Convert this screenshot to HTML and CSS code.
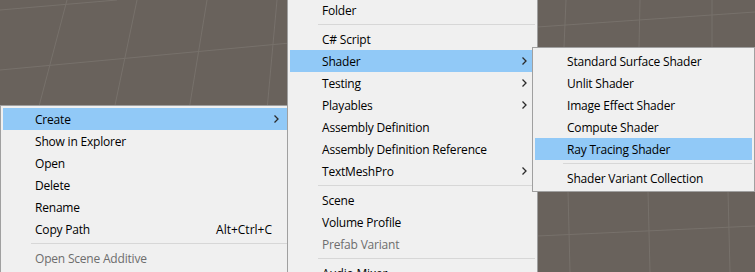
FILE: index.html
```html
<!DOCTYPE html>
<html lang="en">
<head>
    <meta charset="UTF-8">
    <title>Project context menu</title>
    <link rel="stylesheet" href="styles.css">
</head>
<body>
    <div class="scene">
        <svg class="grid" width="755" height="272" viewBox="0 0 755 272">
            <g stroke="#77716b" stroke-width="1" fill="none">
                <line x1="0" y1="10" x2="117" y2="0"/>
                <line x1="0" y1="70" x2="290" y2="43"/>
                <line x1="67" y1="0" x2="38" y2="110"/>
                <line x1="137" y1="0" x2="114" y2="110"/>
                <line x1="207" y1="0" x2="189" y2="110"/>
                <line x1="277" y1="0" x2="267" y2="110"/>
                <line x1="537" y1="27" x2="755" y2="12"/>
                <line x1="566" y1="0" x2="564" y2="47"/>
                <line x1="640" y1="0" x2="639" y2="47"/>
                <line x1="712" y1="0" x2="712" y2="47"/>
                <line x1="537" y1="236" x2="755" y2="226"/>
                <line x1="568" y1="191" x2="570" y2="272"/>
                <line x1="648" y1="191" x2="650" y2="272"/>
                <line x1="728" y1="191" x2="730" y2="272"/>
            </g>
        </svg>

        <div class="menu menu-left">
            <div class="item active">Create <span class="arrow"><svg width="5" height="8" viewBox="0 0 5 8"><polyline points="0.5,0.5 4,4 0.5,7.5" fill="none" stroke="#2b2b2b" stroke-width="1.3"/></svg></span></div>
            <div class="item">Show in Explorer</div>
            <div class="item">Open</div>
            <div class="item">Delete</div>
            <div class="item">Rename</div>
            <div class="item">Copy Path <span class="shortcut">Alt+Ctrl+C</span></div>
            <div class="sep"></div>
            <div class="item disabled">Open Scene Additive</div>
        </div>

        <div class="menu menu-mid">
            <div class="item">Folder</div>
            <div class="sep"></div>
            <div class="item">C# Script</div>
            <div class="item active">Shader <span class="arrow"><svg width="5" height="8" viewBox="0 0 5 8"><polyline points="0.5,0.5 4,4 0.5,7.5" fill="none" stroke="#2b2b2b" stroke-width="1.3"/></svg></span></div>
            <div class="item">Testing <span class="arrow"><svg width="5" height="8" viewBox="0 0 5 8"><polyline points="0.5,0.5 4,4 0.5,7.5" fill="none" stroke="#2b2b2b" stroke-width="1.3"/></svg></span></div>
            <div class="item">Playables <span class="arrow"><svg width="5" height="8" viewBox="0 0 5 8"><polyline points="0.5,0.5 4,4 0.5,7.5" fill="none" stroke="#2b2b2b" stroke-width="1.3"/></svg></span></div>
            <div class="item">Assembly Definition</div>
            <div class="item">Assembly Definition Reference</div>
            <div class="item">TextMeshPro <span class="arrow"><svg width="5" height="8" viewBox="0 0 5 8"><polyline points="0.5,0.5 4,4 0.5,7.5" fill="none" stroke="#2b2b2b" stroke-width="1.3"/></svg></span></div>
            <div class="sep"></div>
            <div class="item">Scene</div>
            <div class="item">Volume Profile</div>
            <div class="item disabled">Prefab Variant</div>
            <div class="sep"></div>
            <div class="item">Audio Mixer</div>
        </div>

        <div class="menu menu-sub">
            <div class="item">Standard Surface Shader</div>
            <div class="item">Unlit Shader</div>
            <div class="item">Image Effect Shader</div>
            <div class="item">Compute Shader</div>
            <div class="item active">Ray Tracing Shader</div>
            <div class="sep"></div>
            <div class="item">Shader Variant Collection</div>
        </div>
    </div>
</body>
</html>
```

FILE: styles.css
```css
body {
    margin: 0;
    font-family: 'Open Sans', 'Noto Sans', sans-serif;
    font-size: 12px;
    color: #000;
}
.scene {
    position: relative;
    width: 755px;
    height: 272px;
    overflow: hidden;
    background-color: #69625c;
}
.grid {
    position: absolute;
    left: 0;
    top: 0;
}
.menu {
    position: absolute;
    background-color: #f0f0f0;
    border: 1px solid #a0a0a0;
    padding: 2px;
    box-sizing: border-box;
}
.menu-left {
    left: 0;
    top: 105px;
    width: 300px;
    height: 190px;
}
.menu-mid {
    left: 287px;
    top: -4px;
    width: 251px;
    height: 300px;
}
.menu-sub {
    left: 532px;
    top: 47px;
    width: 223px;
    height: 145px;
}
.item {
    display: flex;
    align-items: center;
    height: 22px;
    padding-left: 32px;
    padding-right: 8px;
    white-space: nowrap;
    letter-spacing: -0.2px;
}
.item.active {
    background-color: #91c9f7;
}
.item.disabled {
    color: #6d6d6d;
}
.arrow {
    margin-left: auto;
    display: flex;
    align-items: center;
}
.shortcut {
    margin-left: auto;
    margin-right: 7px;
    letter-spacing: 0;
}
.sep {
    height: 1px;
    margin: 3px 0 3px 28px;
    background-color: #d7d7d7;
}
.menu-left .item {
    width: 284px;
    box-sizing: border-box;
}
.menu-left .arrow {
    margin-right: 0;
}
```
